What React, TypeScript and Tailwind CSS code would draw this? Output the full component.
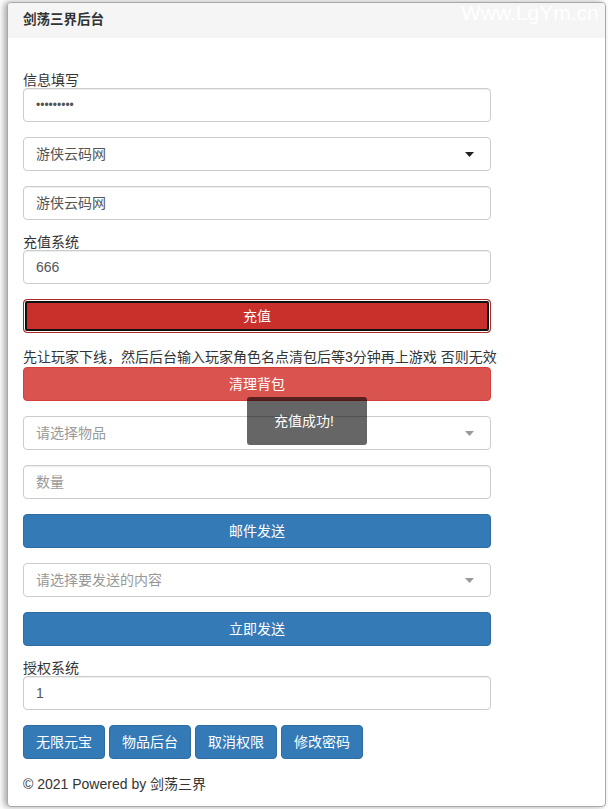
import React from "react";

const font = { fontFamily: '"Liberation Sans", "Noto Sans CJK SC", Arial, sans-serif' };

function Input({ value, placeholder, password }: { value?: string; placeholder?: string; password?: boolean }) {
  return (
    <div className="flex h-[34px] w-[468px] items-center rounded-[4px] border border-[#ccc] bg-white pl-[12px] text-[14px] shadow-[inset_0_1px_1px_rgba(0,0,0,0.075)]">
      {value !== undefined ? (
        <span className={password ? "text-[12px] text-[#555]" : "text-[#555]"}>{value}</span>
      ) : (
        <span className="text-[#999]">{placeholder}</span>
      )}
    </div>
  );
}

function Select({ value, placeholder }: { value?: string; placeholder?: string }) {
  return (
    <div className="flex h-[34px] w-[468px] items-center justify-between rounded-[4px] border border-[#ccc] bg-white pl-[12px] pr-[16px] text-[14px]">
      {value ? <span className="text-[#555]">{value}</span> : <span className="text-[#999]">{placeholder}</span>}
      <svg width="9" height="5" viewBox="0 0 9 5">
        <path d="M0 0 L9 0 L4.5 5 Z" fill={value ? "#222" : "#999"} />
      </svg>
    </div>
  );
}

function Btn({ label, color }: { label: string; color: "primary" | "danger" }) {
  const cls =
    color === "primary"
      ? "bg-[#337ab7] border-[#2e6da4]"
      : "bg-[#d9534f] border-[#d43f3a]";
  return (
    <div className={`flex h-[34px] w-[468px] items-center justify-center rounded-[4px] border text-[14px] text-white ${cls}`}>
      {label}
    </div>
  );
}

export default function App() {
  return (
    <div className="relative h-[809px] w-[608px] overflow-hidden bg-white text-[#333]" style={font}>
      <div className="pl-[7px] pr-[2px] pt-[2px]">
        <div className="h-[805px] overflow-hidden rounded-[4px] border border-[#a9a9a9] bg-white shadow-[-3px_0_6px_rgba(0,0,0,0.35)]">
          <div className="flex h-[35px] items-center bg-[#f5f5f5] pl-[15px] text-[13.5px] font-bold text-[#333]">
            剑荡三界后台
          </div>
          <div className="pl-[15px] pt-[35px]">
            <div className="h-[15px] text-[14px] leading-[15px]">信息填写</div>
            <Input value="•••••••••" password />
            <div className="h-[15px]" />
            <Select value="游侠云码网" />
            <div className="h-[15px]" />
            <Input value="游侠云码网" />
            <div className="h-[15px]" />
            <div className="h-[15px] text-[14px] leading-[15px]">充值系统</div>
            <Input value="666" />
            <div className="h-[15px]" />
            <div className="flex h-[34px] w-[468px] items-center justify-center rounded-[4px] border border-[#ac2925] bg-[#c9302c] text-[14px] text-white shadow-[inset_0_0_0_1px_#ffffff,inset_0_0_0_3px_#111111]">
              充值
            </div>
            <div className="mt-[15px] h-[19px] whitespace-nowrap text-[14px] leading-[19px]">
              先让玩家下线，然后后台输入玩家角色名点清包后等3分钟再上游戏 否则无效
            </div>
            <Btn label="清理背包" color="danger" />
            <div className="h-[15px]" />
            <Select placeholder="请选择物品" />
            <div className="h-[15px]" />
            <Input placeholder="数量" />
            <div className="h-[15px]" />
            <Btn label="邮件发送" color="primary" />
            <div className="h-[15px]" />
            <Select placeholder="请选择要发送的内容" />
            <div className="h-[15px]" />
            <Btn label="立即发送" color="primary" />
            <div className="h-[15px]" />
            <div className="h-[15px] text-[14px] leading-[15px]">授权系统</div>
            <Input value="1" />
            <div className="mt-[15px] flex gap-[4px]">
              {["无限元宝", "物品后台", "取消权限", "修改密码"].map((t) => (
                <div
                  key={t}
                  className="flex h-[34px] w-[82px] items-center justify-center rounded-[4px] border border-[#2e6da4] bg-[#337ab7] text-[14px] text-white"
                >
                  {t}
                </div>
              ))}
            </div>
            <div className="mt-[15px] h-[20px] text-[14px] leading-[20px]">© 2021 Powered by 剑荡三界</div>
          </div>
        </div>
      </div>
      <div className="absolute left-[461px] top-[2px] text-[21px] leading-none text-white">Www.LgYm.cn</div>
      <div className="absolute left-[247px] top-[397px] flex h-[48px] w-[120px] items-center justify-center rounded-[3px] bg-[rgba(0,0,0,0.6)] pr-[6px] text-[14px] text-white">
        充值成功!
      </div>
    </div>
  );
}
